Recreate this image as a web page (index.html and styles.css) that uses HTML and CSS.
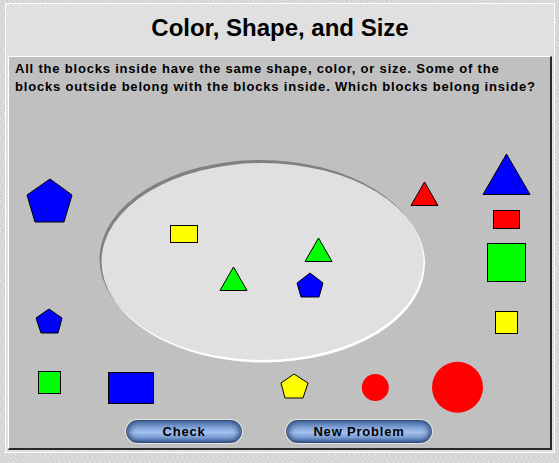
FILE: index.html
```html
<!DOCTYPE html>
<html lang="en">
<head>
    <meta charset="UTF-8">
    <meta name="viewport" content="width=device-width, initial-scale=1.0">
    <title>Color, Shape, and Size</title>
    <link rel="stylesheet" href="styles.css">
</head>
<body>
    <div class="frame">
        <div class="header">Color, Shape, and Size</div>

        <div class="panel">
            <p class="question">All the blocks inside have the same shape, color, or size. Some of the blocks outside belong with the blocks inside. Which blocks belong inside?</p>

            <!-- Tablero: las figuras se colocan en coordenadas de la página -->
            <svg class="board" width="541" height="322" viewBox="9 96 541 322">
                <!-- elipse hundida -->
                <ellipse cx="260.5" cy="259" rx="161" ry="99" fill="#808080"/>
                <ellipse cx="264" cy="263.5" rx="161" ry="99" fill="#ffffff"/>
                <ellipse cx="262.5" cy="261.5" rx="161" ry="98.5" fill="#e0e0e0"/>

                <g stroke="#000" stroke-width="1" stroke-linejoin="miter">
                    <!-- dentro -->
                    <rect x="170.5" y="225.5" width="27" height="17" fill="#ffff00"/>
                    <polygon points="233.5,267 247,290.5 220,290.5" fill="#00ff00"/>
                    <polygon points="318.5,238 332,261.5 305,261.5" fill="#00ff00"/>
                    <polygon points="310,273 323,283 319,297 301,297 297,283" fill="#0000ff"/>

                    <!-- fuera -->
                    <polygon points="50,179 72,195 64,222 35,222 27,195" fill="#0000ff"/>
                    <polygon points="49,309 62,318 58,333 41,333 36,318" fill="#0000ff"/>
                    <rect x="38.5" y="371.5" width="22" height="22" fill="#00ff00"/>
                    <rect x="108.5" y="372.5" width="45" height="31" fill="#0000ff"/>
                    <polygon points="294,374 308,383 303,398 285,398 281,383" fill="#ffff00"/>
                    <polygon points="424.5,182 438,205.5 411,205.5" fill="#ff0000"/>
                    <polygon points="506.5,154 530,194.5 483,194.5" fill="#0000ff"/>
                    <rect x="493.5" y="210.5" width="26" height="18" fill="#ff0000"/>
                    <rect x="487.5" y="243.5" width="38" height="38" fill="#00ff00"/>
                    <rect x="495.5" y="311.5" width="22" height="22" fill="#ffff00"/>
                </g>

                <circle cx="375.3" cy="387.5" r="13.5" fill="#ff0000"/>
                <circle cx="457.5" cy="387.3" r="25.5" fill="#ff0000"/>
            </svg>

            <div class="buttons">
                <button class="pill-btn check-btn">Check</button>
                <button class="pill-btn new-btn">New Problem</button>
            </div>
        </div>
    </div>
</body>
</html>
```

FILE: styles.css
```css
body {
    margin: 0;
    padding: 0;
    background-color: #d9d9d9;
    background-image:
        repeating-linear-gradient(37deg, rgba(255, 255, 255, 0.25) 0 1px, transparent 1px 3px),
        repeating-linear-gradient(-53deg, rgba(0, 0, 0, 0.05) 0 1px, transparent 1px 2px);
    font-family: "Liberation Sans", Arial, sans-serif;
    overflow: hidden;
}

.frame {
    margin: 3px 0 0 5px;
    width: 548px;
    height: 448px;
    border: 1px solid #ffffff;
    background-color: #e0e0e0;
    display: flex;
    flex-direction: column;
}

.header {
    height: 52px;
    line-height: 47px;
    text-align: center;
    font-size: 24px;
    font-weight: 700;
    color: #000;
}

.panel {
    margin: 0 2px 2px 2px;
    height: 391px;
    background-color: #c0c0c0;
    border-top: 1px solid #ffffff;
    border-left: 1px solid #ffffff;
    border-right: 2px solid #2a2a2a;
    border-bottom: 2px solid #2a2a2a;
    display: flex;
    flex-direction: column;
}

.question {
    margin: 0;
    padding: 3px 0 0 6px;
    width: 530px;
    height: 36px;
    flex-shrink: 0;
    font-size: 13px;
    font-weight: 700;
    line-height: 18px;
    letter-spacing: 0.8px;
    color: #000;
}

.board {
    display: block;
    flex-shrink: 0;
}

.buttons {
    display: flex;
    justify-content: center;
    gap: 44px;
    margin-top: 2px;
    padding-right: 1px;
}

/* botones azules en forma de píldora */
.pill-btn {
    height: 23px;
    padding: 0;
    border: 1px solid #2f4a78;
    border-radius: 12px;
    background: linear-gradient(to bottom, #47699f 0%, #88a9dd 35%, #a3c0ee 55%, #7598d0 80%, #3d5d92 100%);
    box-shadow: 0 0 0 1px #e4e4e4, inset 7px 0 6px -5px #2f4a78, inset -7px 0 6px -5px #2f4a78;
    font-family: "Liberation Sans", Arial, sans-serif;
    font-size: 13px;
    font-weight: 700;
    letter-spacing: 0.8px;
    color: #000;
    cursor: pointer;
}

.check-btn {
    width: 116px;
}

.new-btn {
    width: 146px;
}
```
